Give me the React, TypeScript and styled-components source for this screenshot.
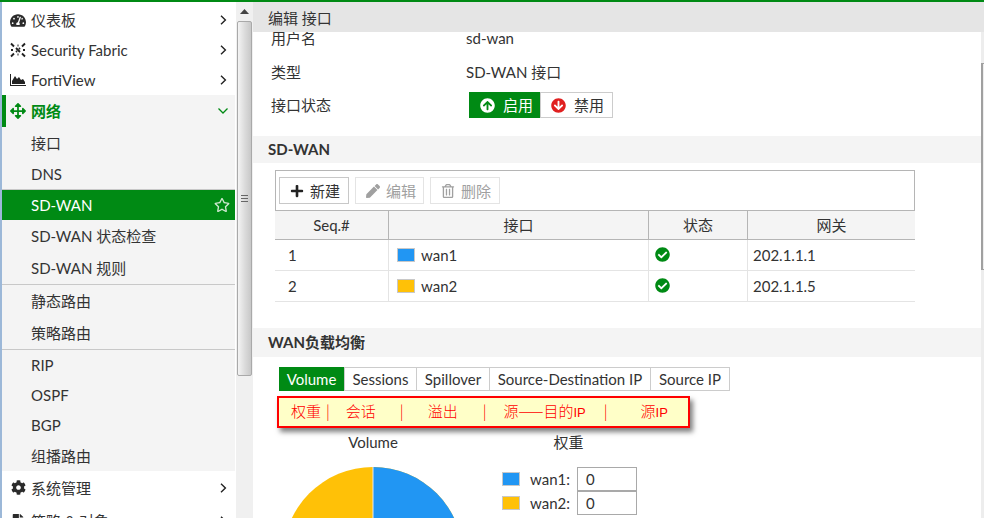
import React from 'react';
import styled, { createGlobalStyle } from 'styled-components';
import { FaTachometerAlt, FaCog, FaArrowsAlt, FaRegStar, FaPlus, FaPen, FaRegTrashAlt, FaCheckCircle, FaArrowCircleUp, FaArrowCircleDown, FaFileAlt } from 'react-icons/fa';

const Global = createGlobalStyle`
  html, body { margin: 0; padding: 0; width: 984px; height: 518px; overflow: hidden; background: #fff; }
  * { box-sizing: border-box; }
  body { font-family: Lato, "Noto Sans CJK SC", sans-serif; font-size: 15px; line-height: 18px; color: #333; }
`;
const Shell = styled.div`
  width: 984px; height: 518px; display: flex; flex-direction: column; overflow: hidden;
`;
const TopLine = styled.div`height: 2px; background: #008a14; flex: none;`;
const Body = styled.div`flex: 1; display: flex; min-height: 0;`;
const Sidebar = styled.nav`
  width: 236px; flex: none; border-left: 2px solid #9cb8d8; border-right: 1px solid #fff; padding-top: 3px; overflow: hidden; background: #fff;
`;
const NavRow = styled.div<{ $bg?: string; $h?: number; $color?: string; $bold?: boolean }>`
  height: ${p => p.$h ?? 30}px; display: flex; align-items: center; padding: 0 6px 0 8px; position: relative;
  background: ${p => p.$bg ?? '#fff'}; color: ${p => p.$color ?? '#333'}; font-weight: ${p => p.$bold ? 700 : 400};
`;
const NavIcon = styled.span`width: 16px; height: 16px; margin-right: 5px; display: flex; align-items: center; justify-content: center; color: #2b2b2b;`;
const NavLabel = styled.span`flex: 1;`;
const Chevron = styled.span`width: 12px; display: flex; justify-content: center;`;
const ActiveBar = styled.span`position: absolute; left: 0; top: 0; bottom: 0; width: 4px; background: #008a14;`;
const Sub = styled.div<{ $active?: boolean; $h?: number; $top?: boolean; $pb?: number }>`
  height: ${p => p.$h ?? 31}px; display: flex; align-items: center; padding: 0 5px ${p => p.$pb ?? 0}px 29px;
  background: ${p => p.$active ? '#008a14' : '#f4f4f4'}; color: ${p => p.$active ? '#fff' : '#333'};
  border-top: ${p => p.$top ? '1px solid #c8c8c8' : 'none'};
  box-shadow: ${p => p.$active ? '0 -1px 0 #c8c8c8' : 'none'};
  svg { margin-left: auto; color: #cfe8d0; }
`;
const Track = styled.div`width: 17px; flex: none; background: #f0f0f0; display: flex; flex-direction: column; align-items: center;`;
const ArrowUp = styled.div`height: 19px; width: 100%; display: flex; align-items: center; justify-content: center; font-size: 0;`;
const Thumb = styled.div`
  width: 15px; height: 355px; border: 1px solid #a9a9a9; border-radius: 2px;
  background: linear-gradient(90deg, #f4f4f4, #dcdcdc 50%, #c8c8c8); display: flex; flex-direction: column; align-items: center; justify-content: center; gap: 2px;
  i { display: block; width: 7px; height: 1px; background: #666; }
`;
const Main = styled.main`flex: 1; min-width: 0; overflow: hidden; display: flex; flex-direction: column; position: relative;`;
const PageHeader = styled.div`height: 30px; flex: none; background: #e5e5e5; padding: 3px 0 0 15px; font-size: 15px; line-height: 27px; color: #333; position: relative; z-index: 1;`;
const InfoRow = styled.div<{ $h: number }>`height: ${p => p.$h}px; display: flex; align-items: center; padding-left: 18px;`;
const InfoLabel = styled.span`width: 195px; flex: none;`;
const InfoBlock = styled.div`height: 107px; flex: none; margin-top: -3px;`;
const Toggle = styled.div`display: flex; height: 26px; margin-left: 3px; flex: none;`;
const ToggleBtn = styled.div<{ $on?: boolean }>`
  display: flex; align-items: center; gap: 8px; padding: 0 ${p => p.$on ? 7 : 8}px 0 ${p => p.$on ? 11 : 10}px;
  background: ${p => p.$on ? '#008a14' : '#fff'}; color: ${p => p.$on ? '#fff' : '#333'};
  border: ${p => p.$on ? 'none' : '1px solid #ccc'}; font-size: 15px;
  svg { color: ${p => p.$on ? '#fff' : '#e02020'}; font-size: 15px; }
`;
const SectionTitle = styled.div`height: 27px; flex: none; background: #f4f4f4; padding-left: 15px; line-height: 27px; font-weight: 700; font-size: 15px; color: #333;`;
const TableWrap = styled.div`margin: 7px 0 0 22px; width: 640px; flex: none;`;
const Tools = styled.div`height: 41px; border: 1px solid #b5b5b5; display: flex; align-items: center; gap: 6px; padding: 0 3px;`;
const ToolBtn = styled.div<{ $off?: boolean; $w: number }>`
  height: 27px; width: ${p => p.$w}px; display: flex; align-items: center; gap: 6px; padding: 0 0 0 10px;
  border: 1px solid ${p => p.$off ? '#e4e4e4' : '#c8c8c8'}; color: ${p => p.$off ? '#a0a0a0' : '#333'};
  svg { font-size: 14px; color: ${p => p.$off ? '#a0a0a0' : '#222'}; }
`;
const Grid = styled.div`width: 640px; display: grid; grid-template-columns: 113px 260px 99px 168px; font-size: 15px;`;
const Th = styled.div`
  height: 29px; background: #f4f4f4; display: flex; align-items: center; justify-content: center;
  border-left: 1px solid #b5b5b5; border-bottom: 1px solid #b5b5b5; &:first-child { border-left: none; }
`;
const Td = styled.div<{ $first?: boolean }>`
  height: 31px; padding: 0 0 0 ${p => p.$first ? 13 : 5}px; border-left: ${p => p.$first ? 'none' : '1px solid #e4e4e4'}; border-bottom: 1px solid #e4e4e4;
  display: flex; align-items: center;
`;
const CellFlex = styled.div`display: flex; align-items: center; gap: 6px; padding-left: 3px;`;
const Swatch = styled.span<{ $c: string }>`width: 18px; height: 14px; background: ${p => p.$c}; border: 1px solid #c8c8c8; display: inline-block; flex: none;`;
const StatusIcon = styled.span`display: flex; color: #008a14; font-size: 15px; margin-top: -2px; padding-left: 1px;`;
const Section2 = styled(SectionTitle)`margin-top: 26px; height: 29px; line-height: 29px;`;
const Tabs = styled.div`display: flex; height: 24px; margin: 10px 0 0 26px; flex: none; border-top: 1px solid #ccc; border-bottom: 1px solid #ccc; width: fit-content;`;
const Tab = styled.div<{ $on?: boolean; $w: number }>`
  width: ${p => p.$w}px; text-align: center; flex: none;
  line-height: ${p => p.$on ? 24 : 22}px; margin-top: ${p => p.$on ? -1 : 0}px; height: ${p => p.$on ? 24 : 22}px;
  background: ${p => p.$on ? '#008a14' : '#fff'}; color: ${p => p.$on ? '#fff' : '#333'};
  border-right: 1px solid #ccc; font-size: 15px;
`;
const Note = styled.div`
  position: absolute; left: 24px; top: 394px; width: 413px; height: 32px; background: #ffffc8; border: 2px solid #f00;
  box-shadow: 3px 4px 5px rgba(0,0,0,.5); color: #f00; font-size: 15px; white-space: pre; line-height: 26px;
  font-family: "Noto Sans CJK SC", "Liberation Sans", sans-serif; font-weight: 300; display: flex;
`;
const NoteItem = styled.span<{ $x: number }>`margin-left: ${p => p.$x}px; flex: none;`;
const NoteLatin = styled.span`font-family: "Liberation Sans", sans-serif; font-size: 13px; font-weight: 400;`;
const Charts = styled.div`display: grid; grid-template-columns: 192px 1fr; margin: 42px 0 0 24px; flex: none;`;
const ChartCol = styled.div`display: flex; flex-direction: column; align-items: center;`;
const ChartTitle = styled.div`height: 19px; line-height: 19px;`;
const Pie = styled.svg`margin-top: 14px; display: block;`;
const WeightCol = styled.div`width: 135px; margin-left: 33px;`;
const WeightTitle = styled.div`text-align: center; height: 19px; line-height: 19px; padding-right: 2px;`;
const Legend = styled.div`display: flex; align-items: center; height: 24px;`;
const LegendWrap = styled.div`margin-top: 15px;`;
const LegendName = styled.span`width: 47px; margin-left: 10px;`;
const ValueBox = styled.div`width: 60px; height: 24px; border: 1px solid #a9a9a9; padding-left: 8px; line-height: 22px;`;
const Right = styled.div`width: 3px; flex: none; background: #ededed; display: flex; flex-direction: column;`;
const RightCap = styled.div`height: 30px; background: #e5e5e5; flex: none;`;
const RightLine = styled.div`margin-top: 31px; height: 207px; border-left: 2px solid #a0a0a0; border-top: 1px solid #a0a0a0; border-bottom: 1px solid #a0a0a0; flex: none;`;

const chevron = <svg width="7" height="10" viewBox="0 0 7 10" fill="none" stroke="#222" strokeWidth="1.4"><path d="M1 .8 5.4 5 1 9.2" /></svg>;
const Trow = ({ seq, c, name, gw }: { seq: string; c: string; name: string; gw: string }) => (
  <>
    <Td $first>{seq}</Td>
    <Td><CellFlex><Swatch $c={c} />{name}</CellFlex></Td>
    <Td><StatusIcon><FaCheckCircle /></StatusIcon></Td>
    <Td>{gw}</Td>
  </>
);

export default function App() {
  return (
    <Shell>
      <Global />
      <TopLine />
      <Body>
        <Sidebar>
          <NavRow><NavIcon><FaTachometerAlt size={17} /></NavIcon><NavLabel>仪表板</NavLabel><Chevron>{chevron}</Chevron></NavRow>
          <NavRow><NavIcon>
            <svg width="16" height="16" viewBox="0 0 16 16" fill="none" stroke="#222" strokeWidth="1.9">
              <path d="M1 1.5 4 4.5M12 11.5 15 14.5M15 1.5 12 4.5M1 14.5 4 11.5M6 6 10 10M10 6 9 7M6 10 7 9M7.5 3.5 8.5 3.5M7.5 12.5 8.5 12.5M1 8h2M13 8h2" />
            </svg>
          </NavIcon><NavLabel>Security Fabric</NavLabel><Chevron>{chevron}</Chevron></NavRow>
          <NavRow><NavIcon>
            <svg width="16" height="14" viewBox="0 0 16 14" fill="#222"><path d="M0 1h1v11h15v1H0z"/><path d="M2 11V8l3-5 2 3 2-2 2 3 2-1 2 3v2z"/></svg>
          </NavIcon><NavLabel>FortiView</NavLabel><Chevron>{chevron}</Chevron></NavRow>
          <NavRow $bg="#f4f4f4" $color="#008a14" $bold $h={32}>
            <ActiveBar />
            <NavIcon><FaArrowsAlt size={16} color="#008a14" /></NavIcon><NavLabel>网络</NavLabel>
            <Chevron><svg width="10" height="6" viewBox="0 0 10 6" fill="none" stroke="#008a14" strokeWidth="1.3"><path d="M.5.5 5 5 9.5.5"/></svg></Chevron>
          </NavRow>
          <Sub $h={32}>接口</Sub>
          <Sub $h={31} $pb={1}>DNS</Sub>
          <Sub $active $h={30}>SD-WAN<FaRegStar size={16} /></Sub>
          <Sub $h={32}>SD-WAN 状态检查</Sub>
          <Sub $h={32}>SD-WAN 规则</Sub>
          <Sub $top $h={33}>静态路由</Sub>
          <Sub $h={32}>策略路由</Sub>
          <Sub $top $h={31}>RIP</Sub>
          <Sub $h={30}>OSPF</Sub>
          <Sub $h={30}>BGP</Sub>
          <Sub $h={31}>组播路由</Sub>
          <NavRow $h={33}><NavIcon><FaCog size={15} /></NavIcon><NavLabel>系统管理</NavLabel><Chevron>{chevron}</Chevron></NavRow>
          <NavRow $h={33}><NavIcon><FaFileAlt size={14} /></NavIcon><NavLabel>策略 &amp; 对象</NavLabel><Chevron>{chevron}</Chevron></NavRow>
        </Sidebar>
        <Track>
          <ArrowUp><svg width="9" height="5" viewBox="0 0 9 5" fill="#444"><path d="M4.5 0 9 5H0z"/></svg></ArrowUp>
          <Thumb><i /><i /><i /></Thumb>
        </Track>
        <Main>
          <PageHeader>编辑 接口</PageHeader>
          <InfoBlock>
            <InfoRow $h={17}><InfoLabel>用户名</InfoLabel><span>sd-wan</span></InfoRow>
            <InfoRow $h={52}><InfoLabel>类型</InfoLabel><span>SD-WAN 接口</span></InfoRow>
            <InfoRow $h={14}><InfoLabel>接口状态</InfoLabel>
              <Toggle>
                <ToggleBtn $on><FaArrowCircleUp />启用</ToggleBtn>
                <ToggleBtn><FaArrowCircleDown />禁用</ToggleBtn>
              </Toggle>
            </InfoRow>
          </InfoBlock>
          <SectionTitle>SD-WAN</SectionTitle>
          <TableWrap>
            <Tools>
              <ToolBtn $w={70}><FaPlus />新建</ToolBtn>
              <ToolBtn $off $w={69}><FaPen />编辑</ToolBtn>
              <ToolBtn $off $w={70}><FaRegTrashAlt />删除</ToolBtn>
            </Tools>
            <Grid>
              <Th>Seq.#</Th><Th>接口</Th><Th>状态</Th><Th>网关</Th>
              <Trow seq="1" c="#2196f3" name="wan1" gw="202.1.1.1" />
              <Trow seq="2" c="#ffc107" name="wan2" gw="202.1.1.5" />
            </Grid>
          </TableWrap>
          <Section2>WAN负载均衡</Section2>
          <Tabs>
            <Tab $on $w={66}>Volume</Tab><Tab $w={72}>Sessions</Tab><Tab $w={73}>Spillover</Tab><Tab $w={161}>Source-Destination IP</Tab><Tab $w={79}>Source IP</Tab>
          </Tabs>
          <Note>
            <NoteItem $x={12}>权重</NoteItem>
            <NoteItem $x={5}>|</NoteItem>
            <NoteItem $x={16}>会话</NoteItem>
            <NoteItem $x={24}>|</NoteItem>
            <NoteItem $x={24}>溢出</NoteItem>
            <NoteItem $x={25}>|</NoteItem>
            <NoteItem $x={17}>源——目的<NoteLatin>IP</NoteLatin></NoteItem>
            <NoteItem $x={18}>|</NoteItem>
            <NoteItem $x={33}>源<NoteLatin>IP</NoteLatin></NoteItem>
          </Note>
          <Charts>
            <ChartCol>
              <ChartTitle>Volume</ChartTitle>
              <Pie width="182" height="182" viewBox="0 0 182 182">
                <circle cx="91" cy="91" r="90" fill="#ffc107" />
                <path d="M91 1a90 90 0 0 1 0 180z" fill="#2196f3" />
                <path d="M91 1v180" stroke="#e8e8e8" strokeWidth="1" />
              </Pie>
            </ChartCol>
            <WeightCol>
              <WeightTitle>权重</WeightTitle>
              <LegendWrap>
                <Legend><Swatch $c="#2196f3" /><LegendName>wan1:</LegendName><ValueBox>0</ValueBox></Legend>
                <Legend><Swatch $c="#ffc107" /><LegendName>wan2:</LegendName><ValueBox>0</ValueBox></Legend>
              </LegendWrap>
            </WeightCol>
          </Charts>
        </Main>
        <Right><RightCap /><RightLine /></Right>
      </Body>
    </Shell>
  );
}
